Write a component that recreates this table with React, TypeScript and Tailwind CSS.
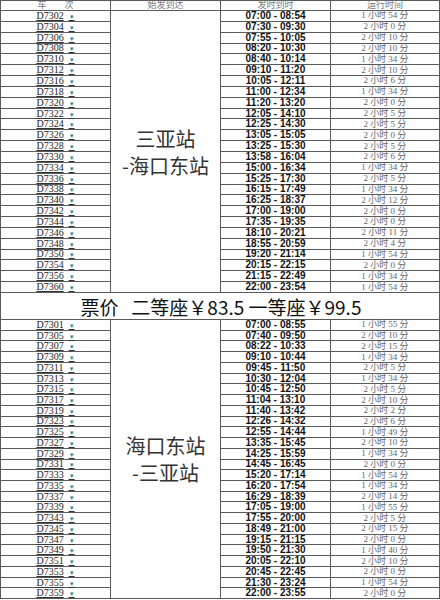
import React from "react";

type Row = { no: string; time: string; dur: string };

const up: Row[] = [
  { no: "D7302", time: "07:00 - 08:54", dur: "1 小时 54 分" },
  { no: "D7304", time: "07:30 - 09:30", dur: "2 小时 0 分" },
  { no: "D7306", time: "07:55 - 10:05", dur: "2 小时 10 分" },
  { no: "D7308", time: "08:20 - 10:30", dur: "2 小时 10 分" },
  { no: "D7310", time: "08:40 - 10:14", dur: "1 小时 34 分" },
  { no: "D7312", time: "09:10 - 11:20", dur: "2 小时 10 分" },
  { no: "D7316", time: "10:05 - 12:11", dur: "2 小时 6 分" },
  { no: "D7318", time: "11:00 - 12:34", dur: "1 小时 34 分" },
  { no: "D7320", time: "11:20 - 13:20", dur: "2 小时 0 分" },
  { no: "D7322", time: "12:05 - 14:10", dur: "2 小时 5 分" },
  { no: "D7324", time: "12:25 - 14:30", dur: "2 小时 5 分" },
  { no: "D7326", time: "13:05 - 15:05", dur: "2 小时 0 分" },
  { no: "D7328", time: "13:25 - 15:30", dur: "2 小时 5 分" },
  { no: "D7330", time: "13:58 - 16:04", dur: "2 小时 6 分" },
  { no: "D7334", time: "15:00 - 16:34", dur: "1 小时 34 分" },
  { no: "D7336", time: "15:25 - 17:30", dur: "2 小时 5 分" },
  { no: "D7338", time: "16:15 - 17:49", dur: "1 小时 34 分" },
  { no: "D7340", time: "16:25 - 18:37", dur: "2 小时 12 分" },
  { no: "D7342", time: "17:00 - 19:00", dur: "2 小时 0 分" },
  { no: "D7344", time: "17:35 - 19:35", dur: "2 小时 0 分" },
  { no: "D7346", time: "18:10 - 20:21", dur: "2 小时 11 分" },
  { no: "D7348", time: "18:55 - 20:59", dur: "2 小时 4 分" },
  { no: "D7350", time: "19:20 - 21:14", dur: "1 小时 54 分" },
  { no: "D7354", time: "20:15 - 22:15", dur: "2 小时 0 分" },
  { no: "D7356", time: "21:15 - 22:49", dur: "1 小时 34 分" },
  { no: "D7360", time: "22:00 - 23:54", dur: "1 小时 54 分" },
];

const down: Row[] = [
  { no: "D7301", time: "07:00 - 08:55", dur: "1 小时 55 分" },
  { no: "D7305", time: "07:40 - 09:50", dur: "2 小时 10 分" },
  { no: "D7307", time: "08:22 - 10:33", dur: "2 小时 15 分" },
  { no: "D7309", time: "09:10 - 10:44", dur: "1 小时 34 分" },
  { no: "D7311", time: "09:45 - 11:50", dur: "2 小时 5 分" },
  { no: "D7313", time: "10:30 - 12:04", dur: "1 小时 34 分" },
  { no: "D7315", time: "10:45 - 12:50", dur: "2 小时 5 分" },
  { no: "D7317", time: "11:04 - 13:10", dur: "2 小时 10 分" },
  { no: "D7319", time: "11:40 - 13:42", dur: "2 小时 2 分" },
  { no: "D7323", time: "12:26 - 14:32", dur: "2 小时 6 分" },
  { no: "D7325", time: "12:55 - 14:44", dur: "1 小时 49 分" },
  { no: "D7327", time: "13:35 - 15:45", dur: "2 小时 10 分" },
  { no: "D7329", time: "14:25 - 15:59", dur: "1 小时 34 分" },
  { no: "D7331", time: "14:45 - 16:45", dur: "2 小时 0 分" },
  { no: "D7333", time: "15:20 - 17:14", dur: "1 小时 54 分" },
  { no: "D7335", time: "16:20 - 17:54", dur: "1 小时 34 分" },
  { no: "D7337", time: "16:29 - 18:39", dur: "2 小时 14 分" },
  { no: "D7339", time: "17:05 - 19:00", dur: "1 小时 55 分" },
  { no: "D7343", time: "17:55 - 20:00", dur: "2 小时 5 分" },
  { no: "D7345", time: "18:49 - 21:00", dur: "2 小时 15 分" },
  { no: "D7347", time: "19:15 - 21:15", dur: "2 小时 0 分" },
  { no: "D7349", time: "19:50 - 21:30", dur: "1 小时 40 分" },
  { no: "D7351", time: "20:05 - 22:10", dur: "2 小时 10 分" },
  { no: "D7353", time: "20:45 - 22:45", dur: "2 小时 0 分" },
  { no: "D7355", time: "21:30 - 23:24", dur: "1 小时 54 分" },
  { no: "D7359", time: "22:00 - 23:55", dur: "2 小时 0 分" },
];

const line = "border-[#5a5a5a]";
const serif = { fontFamily: '"Liberation Serif", "Noto Sans CJK SC", serif' };
const cjk = { fontFamily: '"Noto Sans CJK SC", "Liberation Sans", sans-serif' };

function Section({ rows, from, to, height }: { rows: Row[]; from: string; to: string; height: string }) {
  return (
    <div className={`flex ${height}`}>
      {/* 车次 */}
      <div className={`w-[110px] flex flex-col border-r ${line}`}>
        {rows.map((r) => (
          <div key={r.no} className={`flex-1 min-h-0 border-b ${line} flex items-center justify-center`}>
            <span className="text-[10px] leading-none text-[#222] underline decoration-[#333] underline-offset-1 whitespace-nowrap" style={serif}>
              {r.no}
              <span className="ml-[5px] text-[6px] text-[#2d7f99]">▼</span>
            </span>
          </div>
        ))}
      </div>

      {/* 始发到达 */}
      <div className={`w-[110px] flex items-center justify-center border-r border-b ${line}`}>
        <div className="text-[20px] leading-[27px] text-[#333] text-center" style={cjk}>
          <div>{from}</div>
          <div>{to}</div>
        </div>
      </div>

      {/* 发时到时 */}
      <div className={`w-[110px] flex flex-col border-r ${line}`}>
        {rows.map((r) => (
          <div key={r.no} className={`flex-1 min-h-0 border-b ${line} flex items-center justify-center`}>
            <span className="text-[10px] font-bold leading-none text-[#111] whitespace-pre" style={{ fontFamily: '"Liberation Sans", sans-serif' }}>
              {r.time}
            </span>
          </div>
        ))}
      </div>

      {/* 运行时间 */}
      <div className={`flex-1 flex flex-col border-r ${line}`}>
        {rows.map((r) => (
          <div key={r.no} className={`flex-1 min-h-0 border-b ${line} flex items-center justify-center`}>
            <span className="text-[9px] leading-none text-[#666] whitespace-pre" style={serif}>
              {r.dur}
            </span>
          </div>
        ))}
      </div>
    </div>
  );
}

export default function App() {
  return (
    <div className="w-[440px] h-[600px] bg-white overflow-hidden">
      <div className={`border-l border-t ${line}`}>
        <div className="flex h-[10px] text-[9px] leading-none text-[#777]" style={serif}>
          <div className={`w-[110px] border-r border-b ${line} flex items-center justify-center`}>
            <span className="whitespace-pre">车        次</span>
          </div>
          <div className={`w-[110px] border-r border-b ${line} flex items-center justify-center`}>始发到达</div>
          <div className={`w-[110px] border-r border-b ${line} flex items-center justify-center`}>发时到时</div>
          <div className={`flex-1 border-r border-b ${line} flex items-center justify-center`}>运行时间</div>
        </div>
        <Section rows={up} from="三亚站" to="-海口东站" height="h-[282px]" />
        <div className={`h-[27px] border-r border-b ${line} flex items-center justify-center`}>
          <span className="text-[19px] leading-none text-[#111] whitespace-pre pl-[2px]" style={cjk}>
            {"票价   二等座￥83.5 一等座￥99.5"}
          </span>
        </div>
        <Section rows={down} from="海口东站" to="-三亚站" height="h-[279px]" />
      </div>
    </div>
  );
}
